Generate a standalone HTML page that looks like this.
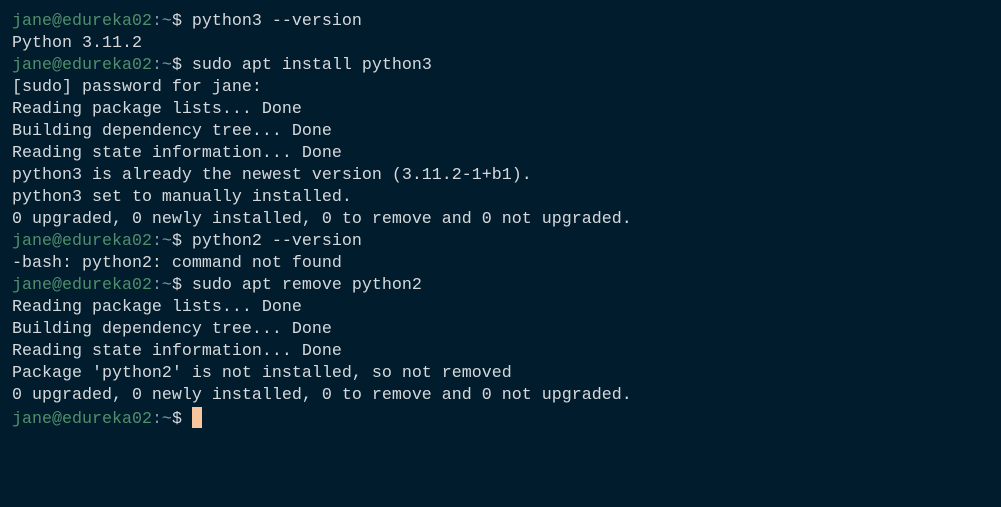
<!DOCTYPE html><html><head><style>
body{margin:0;background:#011c2c;width:1001px;height:507px;overflow:hidden}
pre{margin:0;position:absolute;left:12px;top:11px;font-family:"Liberation Mono",monospace;font-size:16.67px;line-height:22px;color:#d6d9dc}
.g{color:#4f8f6c}.t{color:#7f9aa8}
.c{display:inline-block;width:10px;height:21px;background:#f8c69c;vertical-align:-5px}
</style></head><body><pre><span class="g">jane@edureka02</span><span class="t">:~</span>$ python3 --version
Python 3.11.2
<span class="g">jane@edureka02</span><span class="t">:~</span>$ sudo apt install python3
[sudo] password for jane:
Reading package lists... Done
Building dependency tree... Done
Reading state information... Done
python3 is already the newest version (3.11.2-1+b1).
python3 set to manually installed.
0 upgraded, 0 newly installed, 0 to remove and 0 not upgraded.
<span class="g">jane@edureka02</span><span class="t">:~</span>$ python2 --version
-bash: python2: command not found
<span class="g">jane@edureka02</span><span class="t">:~</span>$ sudo apt remove python2
Reading package lists... Done
Building dependency tree... Done
Reading state information... Done
Package 'python2' is not installed, so not removed
0 upgraded, 0 newly installed, 0 to remove and 0 not upgraded.
<span class="g">jane@edureka02</span><span class="t">:~</span>$ <span class="c"></span></pre></body></html>
